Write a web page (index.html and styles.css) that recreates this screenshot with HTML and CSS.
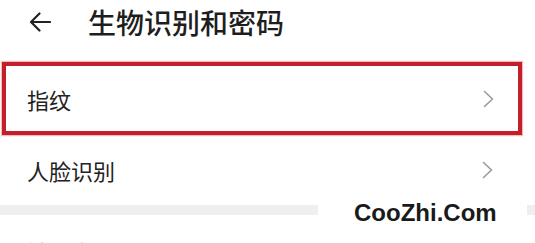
FILE: index.html
```html
<!DOCTYPE html>
<html lang="zh-CN">
<head>
<meta charset="utf-8">
<title>生物识别和密码</title>
<link rel="stylesheet" href="styles.css">
</head>
<body>
<div class="page">
  <header class="header">
    <svg class="back" width="22" height="20" viewBox="0 0 22 20"><path d="M21 10H2M10.5 1.5L2 10l8.5 8.5" fill="none" stroke="#222" stroke-width="2.2" stroke-linecap="round" stroke-linejoin="round"/></svg>
    <h1 class="title">生物识别和密码</h1>
  </header>
  <div class="row row-highlight">
    <span class="label">指纹</span>
    <svg class="chev" width="11" height="18" viewBox="0 0 11 18"><path d="M1.5 1.5L9.5 9l-8 7.5" fill="none" stroke="#9a9a9a" stroke-width="1.6" stroke-linecap="round" stroke-linejoin="round"/></svg>
  </div>
  <div class="row">
    <span class="label">人脸识别</span>
    <svg class="chev" width="11" height="18" viewBox="0 0 11 18"><path d="M1.5 1.5L9.5 9l-8 7.5" fill="none" stroke="#9a9a9a" stroke-width="1.6" stroke-linecap="round" stroke-linejoin="round"/></svg>
  </div>
  <div class="divider"></div>
  <div class="row row-cut">
    <span class="label label-faint">锁屏密码</span>
  </div>
  <div class="watermark">CooZhi.Com</div>
</div>
</body>
</html>
```
FILE: styles.css
```css
html, body {
  margin: 0;
  padding: 0;
  background: #fff;
}
.page {
  position: relative;
  width: 535px;
  height: 243px;
  overflow: hidden;
  font-family: "Noto Sans CJK SC", "Noto Sans", sans-serif;
  color: #1e1e1e;
}
.header {
  height: 44px;
  display: flex;
  align-items: center;
  padding-left: 29px;
}
.back {
  display: block;
}
.title {
  margin: 0 0 0 37px;
  font-size: 28px;
  font-weight: 500;
  line-height: 1;
  color: #1e1e1e;
}
.row {
  height: 70px;
  display: flex;
  align-items: center;
  justify-content: space-between;
  padding: 0 42px 0 27px;
  box-sizing: border-box;
}
.row-highlight {
  margin: 18px 13px 0 2px;
  height: 73px;
  border: 4px solid #c21f2a;
  padding: 0 24px 0 21px;
  box-shadow: 0 0 1px 1px rgba(220, 60, 70, 0.35);
}
.label {
  font-size: 22px;
  line-height: 1;
  color: #222;
}
.chev {
  display: block;
}
.divider {
  height: 10px;
  background: #efefef;
}
.row-cut {
  height: auto;
  padding-top: 25px;
  align-items: flex-start;
}
.label-faint {
  color: #c8c8c8;
}
.watermark {
  position: absolute;
  left: 318px;
  top: 198px;
  width: 209px;
  height: 30px;
  background: #fff;
  box-sizing: border-box;
  padding-left: 36px;
  font-family: "Liberation Sans", Arial, sans-serif;
  font-weight: bold;
  font-size: 24px;
  line-height: 30px;
  color: #1a1a1a;
}
```
